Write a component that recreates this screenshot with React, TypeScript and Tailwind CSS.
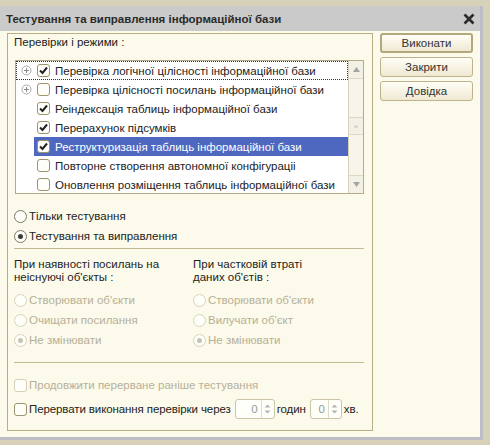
import React from 'react'

const rows = [
  { text: 'Перевірка логічної цілісності інформаційної бази', checked: true, plus: true, focus: true },
  { text: 'Перевірка цілісності посилань інформаційної бази', checked: false, plus: true },
  { text: 'Реіндексація таблиць інформаційної бази', checked: true },
  { text: 'Перерахунок підсумків', checked: true },
  { text: 'Реструктуризація таблиць інформаційної бази', checked: true, selected: true },
  { text: 'Повторне створення автономної конфігураціі', checked: false },
  { text: 'Оновлення розміщення таблиць інформаційної бази', checked: false },
]

function CheckBox({ checked, disabled }: { checked?: boolean; disabled?: boolean }) {
  return (
    <span
      className={`flex h-[13px] w-[13px] shrink-0 items-center justify-center rounded-[3px] border bg-[#fffffa] ${
        disabled ? 'border-[#d6d0b6]' : 'border-[#9d936c]'
      }`}
    >
      {checked && (
        <svg width="11" height="11" viewBox="0 0 11 11">
          <path d="M2 5.5 L4.5 8 L9 2.5" fill="none" stroke="#222" strokeWidth="2" />
        </svg>
      )}
    </span>
  )
}

function Radio({ checked, disabled }: { checked?: boolean; disabled?: boolean }) {
  return (
    <span
      className={`flex h-[13px] w-[13px] shrink-0 items-center justify-center rounded-full border bg-[#fffffa] ${
        disabled ? 'border-[#d9d3bb]' : 'border-[#7d7763]'
      }`}
    >
      {checked && <span className={`h-[5px] w-[5px] rounded-full ${disabled ? 'bg-[#c8c3b0]' : 'bg-[#3a3a3a]'}`} />}
    </span>
  )
}

function PlusIcon() {
  return (
    <svg width="11" height="11" viewBox="0 0 11 11">
      <circle cx="5.5" cy="5.5" r="4.5" fill="#fff" stroke="#a8a8a8" />
      <path d="M3 5.5 H8 M5.5 3 V8" stroke="#8a8a8a" />
    </svg>
  )
}

function Button({ label, main }: { label: string; main?: boolean }) {
  return (
    <div
      className={`flex h-[20px] w-[93px] items-center justify-center rounded-[3px] bg-gradient-to-b from-[#fffef6] to-[#efe9d3] text-[#333] ${
        main ? 'border-2 border-[#b3a77c]' : 'border border-[#bdb28a]'
      }`}
    >
      {label}
    </div>
  )
}

function Spin({ w }: { w: string }) {
  return (
    <div className={`flex h-[20px] ${w} items-center rounded-[3px] border border-[#cbc4a6] bg-[#fffffa]`}>
      <span className="flex-1 pr-[3px] text-right text-[#9a9a9a]">0</span>
      <span className="flex h-full w-[13px] flex-col items-center justify-center border-l border-[#e0dbc6]">
        <svg width="7" height="12" viewBox="0 0 7 12">
          <path d="M0.5 4.5 L3.5 1.5 L6.5 4.5 Z M0.5 7.5 L3.5 10.5 L6.5 7.5 Z" fill="#b3b3b3" />
        </svg>
      </span>
    </div>
  )
}

export default function App() {
  return (
    <div className="h-[445px] w-[490px] overflow-hidden bg-[#d7d1ba] pt-[6px] font-['Liberation_Sans',Arial,sans-serif] text-[11.5px] leading-[14px] text-[#222]">
      <div className="w-[483px] border-b-[3px] border-r-[3px] border-[#bdbdc4] bg-[#fcfaea]">
        {/* title bar */}
        <div className="flex h-[25px] items-center justify-between bg-[#cacaca] pl-[6px] pr-[5px]">
          <span className="font-bold text-[#2a2a2a]">Тестування та виправлення інформаційної бази</span>
          <svg width="12" height="12" viewBox="0 0 12 12">
            <path d="M1.5 1.5 L10.5 10.5 M10.5 1.5 L1.5 10.5" stroke="#2a2a2a" strokeWidth="2.6" />
          </svg>
        </div>

        <div className="flex pb-[6px] pl-[7px] pt-[2px]">
          {/* group box */}
          <div className="flex h-[398px] w-[366px] flex-col border border-[#b9ae87] pl-[6px] pr-[8px]">
            <div className="h-[26px] pt-[1px]">Перевірки і режими :</div>

            {/* list */}
            <div className="ml-[1px] flex h-[134px] border border-[#b4aa86] bg-white">
              <div className="flex-1 overflow-hidden">
                {rows.map((r, i) => (
                  <div
                    key={i}
                    className={`flex h-[19px] items-center ${r.focus ? 'outline outline-1 outline-dotted outline-[#333] -outline-offset-1' : ''}`}
                  >
                    <span className="flex w-[16px] justify-end">{r.plus && <PlusIcon />}</span>
                    <span className={`ml-[2px] flex h-full flex-1 items-center pl-[3px] ${r.selected ? 'bg-[#4f68bf] text-white' : ''}`}>
                      <CheckBox checked={r.checked} />
                      <span className="ml-[5px] whitespace-nowrap">{r.text}</span>
                    </span>
                  </div>
                ))}
              </div>
              {/* scrollbar */}
              <div className="flex w-[15px] flex-col border-l border-[#d8d2bb] bg-[#f7f5ea]">
                <div className="flex h-[18px] items-center justify-center border-b border-[#ddd8c4] bg-[#f3f1e6]">
                  <svg width="7" height="5" viewBox="0 0 7 5">
                    <path d="M0 5 L3.5 0 L7 5 Z" fill="#a5a5a5" />
                  </svg>
                </div>
                <div className="h-[38px]" />
                <div className="flex h-[18px] items-center justify-center border-y border-[#ddd8c4] bg-[#f3f1e6]">
                  <span className="h-[3px] w-[4px] rounded-full bg-[#d8d6cc]" />
                </div>
                <div className="flex-1" />
                <div className="flex h-[18px] items-center justify-center border-t border-[#ddd8c4] bg-[#f3f1e6]">
                  <svg width="7" height="5" viewBox="0 0 7 5">
                    <path d="M0 0 L3.5 5 L7 0 Z" fill="#a5a5a5" />
                  </svg>
                </div>
              </div>
            </div>

            {/* mode radios */}
            <div className="mt-[12px] flex h-[20px] items-center gap-[2px]">
              <Radio />
              <span>Тільки тестування</span>
            </div>
            <div className="flex h-[20px] items-center gap-[2px]">
              <Radio checked />
              <span>Тестування та виправлення</span>
            </div>

            <div className="mt-[2px] h-px bg-[#c3b993]" />

            <div className="mt-[9px] grid grid-cols-[179px_1fr] leading-[13px]">
              <div>
                <div className="h-[32px]">
                  При наявності посилань на
                  <br />
                  неіснуючі об'єкты :
                </div>
                <div className="text-[#b7b099]">
                  <div className="flex h-[20px] items-center gap-[2px]">
                    <Radio disabled />
                    <span>Створювати об'єкти</span>
                  </div>
                  <div className="flex h-[20px] items-center gap-[2px]">
                    <Radio disabled />
                    <span>Очищати посилання</span>
                  </div>
                  <div className="flex h-[20px] items-center gap-[2px]">
                    <Radio disabled checked />
                    <span>Не змінювати</span>
                  </div>
                </div>
              </div>
              <div>
                <div className="h-[32px]">
                  При частковій втраті
                  <br />
                  даних об'єтів :
                </div>
                <div className="text-[#b7b099]">
                  <div className="flex h-[20px] items-center gap-[2px]">
                    <Radio disabled />
                    <span>Створювати об'єкти</span>
                  </div>
                  <div className="flex h-[20px] items-center gap-[2px]">
                    <Radio disabled />
                    <span>Вилучати об'єкт</span>
                  </div>
                  <div className="flex h-[20px] items-center gap-[2px]">
                    <Radio disabled checked />
                    <span>Не змінювати</span>
                  </div>
                </div>
              </div>
            </div>

            <div className="mt-[12px] h-px bg-[#c3b993]" />

            <div className="mt-[12px] flex h-[20px] items-center gap-[2px] text-[#b7b099]">
              <CheckBox disabled />
              <span>Продовжити перерване раніше тестування</span>
            </div>
            <div className="mt-[4px] flex h-[20px] items-center gap-[2px] whitespace-nowrap tracking-[-0.1px]">
              <CheckBox />
              <span>Перервати виконання перевірки через</span>
              <span className="ml-[2px]"><Spin w="w-[40px]" /></span>
              <span>годин</span>
              <span className="ml-[2px]"><Spin w="w-[32px]" /></span>
              <span>хв.</span>
            </div>
          </div>

          {/* buttons */}
          <div className="ml-[7px] flex flex-col gap-[4px]">
            <Button label="Виконати" main />
            <Button label="Закрити" />
            <Button label="Довідка" />
          </div>
        </div>
      </div>
    </div>
  )
}
